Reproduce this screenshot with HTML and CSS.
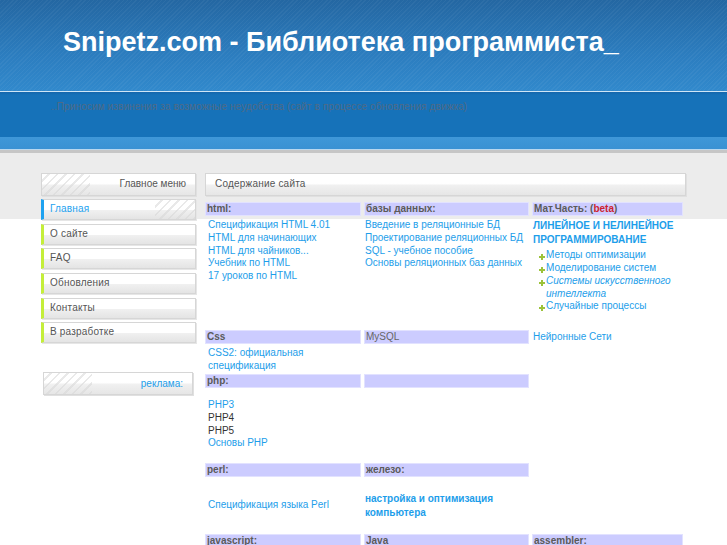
FILE: index.html
```html
<!DOCTYPE html>
<html lang="ru">
<head>
<meta charset="utf-8">
<title>Snipetz.com - Библиотека программиста</title>
<link rel="stylesheet" href="styles.css">
</head>
<body>
<header class="top">
  <div class="masthead"><h1 class="title">Snipetz.com - Библиотека программиста_</h1></div>
  <div class="notice-band"><p class="notice">..Приносим извинения за возможные неудобства (сайт в процессе обновления движка)</p></div>
  <div class="subband"></div>
</header>
<div class="main">
  <aside class="sidebar">
    <div class="box box-head stripes-left">Главное меню</div>
    <ul class="menu">
      <li class="menu-item active"><a href="#">Главная</a></li>
      <li class="menu-item"><a href="#">О сайте</a></li>
      <li class="menu-item"><a href="#">FAQ</a></li>
      <li class="menu-item"><a href="#">Обновления</a></li>
      <li class="menu-item"><a href="#">Контакты</a></li>
      <li class="menu-item"><a href="#">В разработке</a></li>
    </ul>
    <div class="box ad stripes-left"><a href="#">реклама:</a></div>
  </aside>
  <section class="content">
    <div class="box content-head">Содержание сайта</div>
    <div class="catalog">
      <div class="hd">html:</div>
      <div class="hd">базы данных:</div>
      <div class="hd">Мат.Часть: (<span class="beta">beta</span>)</div>

      <div class="cell first">
        <a href="#">Спецификация HTML 4.01</a><br>
        <a href="#">HTML для начинающих</a><br>
        <a href="#">HTML для чайников...</a><br>
        <a href="#">Учебник по HTML</a><br>
        <a href="#">17 уроков по HTML</a>
      </div>
      <div class="cell">
        <a href="#">Введение в реляционные БД</a><br>
        <a href="#">Проектирование реляционных БД</a><br>
        <a href="#">SQL - учебное пособие</a><br>
        <a href="#">Основы реляционных баз данных</a>
      </div>
      <div class="cell">
        <a href="#" class="strong title-link">ЛИНЕЙНОЕ И НЕЛИНЕЙНОЕ ПРОГРАММИРОВАНИЕ</a>
        <ul class="plus-list">
          <li><a href="#">Методы оптимизации</a></li>
          <li><a href="#">Моделирование систем</a></li>
          <li><a href="#" class="it">Системы искусственного интеллекта</a></li>
          <li><a href="#">Случайные процессы</a></li>
        </ul>
      </div>

      <div class="hd">Css</div>
      <div class="hd plain">MySQL</div>
      <div class="cell"><a href="#">Нейронные Сети</a></div>

      <div class="cell first"><a href="#">CSS2: официальная спецификация</a></div>
      <div class="cell"></div>
      <div class="cell"></div>

      <div class="hd">php:</div>
      <div class="hd"></div>
      <div class="cell"></div>

      <div class="cell first php">
        <a href="#">PHP3</a><br>
        <span class="dim">PHP4</span><br>
        <span class="dim">PHP5</span><br>
        <a href="#">Основы PHP</a>
      </div>
      <div class="cell"></div>
      <div class="cell"></div>

      <div class="hd">perl:</div>
      <div class="hd">железо:</div>
      <div class="cell"></div>

      <div class="cell first mid"><a href="#">Спецификация языка Perl</a></div>
      <div class="cell mid"><a href="#" class="strong">настройка и оптимизация компьютера</a></div>
      <div class="cell"></div>

      <div class="hd">javascript:</div>
      <div class="hd">Java</div>
      <div class="hd">assembler:</div>
    </div>
  </section>
</div>
</body>
</html>
```
FILE: styles.css
```css
html, body {
  margin: 0;
  padding: 0;
  background: #fff;
  font-family: "Liberation Sans", Arial, sans-serif;
  font-size: 10px;
}

a { text-decoration: none; color: #1d9eea; }

.top { display: block; }

.masthead {
  height: 91px;
  background:
    repeating-linear-gradient(135deg, rgba(255,255,255,0.045) 0 1px, rgba(255,255,255,0) 1px 3px),
    linear-gradient(#2467a2, #2c7dbf 60%, #3189cc);
  border-bottom: 1px solid #cfe6f6;
  display: flex;
  align-items: center;
}

.title {
  margin: 0 0 6px 63px;
  color: #fff;
  font-family: "Liberation Sans", Arial, sans-serif;
  font-weight: bold;
  font-size: 27px;
}

.notice-band {
  height: 45px;
  background: linear-gradient(#1466ac, #1672b9 3px, #1672b9);
}

.notice {
  margin: 0;
  padding: 9px 0 0 51px;
  font-size: 10px;
  letter-spacing: 0.12px;
  color: #4f6a86;
}

.subband {
  height: 12px;
  background: linear-gradient(#3f97d8, #3a91d3);
  border-bottom: 1px solid #b9d7ee;
}

.main {
  display: flex;
  gap: 9px;
  padding: 20px 0 0 41px;
  border-top: 3px solid #c6c6c6;
  background: linear-gradient(#ececec 0 66px, #fff 66px);
  min-height: 380px;
}

.sidebar {
  width: 155px;
  display: flex;
  flex-direction: column;
}

.box {
  box-sizing: border-box;
  border: 1px solid #d6d6d6;
  background: linear-gradient(#fff 0, #fff 45%, #f0f0f0 55%, #e6e6e6 100%);
  box-shadow: 1px 1px 0 #e0e0e0;
  color: #555;
  font-size: 10px;
}

.stripes-left {
  background:
    repeating-linear-gradient(135deg, rgba(0,0,0,0) 0 4px, rgba(215,215,215,0.55) 4px 6px) 0 0 / 48px 100% no-repeat,
    linear-gradient(#fff 0, #fff 45%, #f0f0f0 55%, #e6e6e6 100%);
}

.box-head {
  height: 23px;
  line-height: 20px;
  text-align: right;
  padding-right: 9px;
}

.menu {
  list-style: none;
  margin: 3px 0 0 0;
  padding: 0;
  display: flex;
  flex-direction: column;
  gap: 3.7px;
}

.menu-item {
  box-sizing: border-box;
  height: 21px;
  border: 1px solid #d6d6d6;
  border-left: 3px solid #c4ee3a;
  background: linear-gradient(#fff 0, #fff 50%, #f0f0f0 55%, #e4e4e4 100%);
  box-shadow: 1px 1px 0 #e6e6e6;
  line-height: 17px;
  padding-left: 6px;
  letter-spacing: 0.2px;
}

.menu-item a { color: #555; }

.menu-item.active {
  border-left-color: #1ea2f0;
  background:
    repeating-linear-gradient(135deg, rgba(0,0,0,0) 0 4px, rgba(215,215,215,0.55) 4px 6px) right 0 top 0 / 40px 100% no-repeat,
    linear-gradient(#fff 0, #fff 50%, #f0f0f0 55%, #e4e4e4 100%);
}
.menu-item.active a { color: #1ea2f0; }

.ad {
  margin: 29px 0 0 2px;
  width: 150px;
  height: 23px;
  line-height: 21px;
  text-align: right;
  padding-right: 9px;
}
.ad a { color: #1d9eea; }

.content {
  width: 481px;
  display: flex;
  flex-direction: column;
}

.content-head {
  height: 23px;
  line-height: 20px;
  padding-left: 9px;
  letter-spacing: 0.2px;
}

.catalog {
  margin-top: 6px;
  width: 478px;
  display: grid;
  grid-template-columns: 156px 165px 151px;
  grid-template-rows: 14px 110px 14px 26px 14px 71px 14px 53px 14px;
  column-gap: 3px;
  row-gap: 2px;
}

.hd {
  box-sizing: border-box;
  background: #ccccff;
  border: 1px solid #e2e2ff;
  color: #5a5a5a;
  font-weight: bold;
  line-height: 12px;
  padding-left: 1px;
  white-space: nowrap;
  overflow: hidden;
}
.hd.plain { font-weight: normal; color: #666; }

.beta { color: #cc1f2f; }

.cell {
  padding-left: 1px;
  padding-top: 1px;
  line-height: 12.75px;
}
.cell.first { padding-left: 3px; }

.strong { font-weight: bold; line-height: 13.5px; display: inline-block; }

.plus-list {
  list-style: none;
  margin: 3px 0 0 0;
  padding: 0 0 0 6px;
}
.plus-list li {
  position: relative;
  padding-left: 7px;
}
.plus-list li::before {
  content: "";
  position: absolute;
  left: 0;
  top: 5px;
  width: 6px;
  height: 6px;
  background:
    linear-gradient(#9cc23a, #9cc23a) center / 6px 2px no-repeat,
    linear-gradient(#9cc23a, #9cc23a) center / 2px 6px no-repeat;
}
.it { font-style: italic; }

.php { padding-top: 9px; }
.dim { color: #333; }

.mid { display: flex; align-items: center; padding-top: 0; }
```
